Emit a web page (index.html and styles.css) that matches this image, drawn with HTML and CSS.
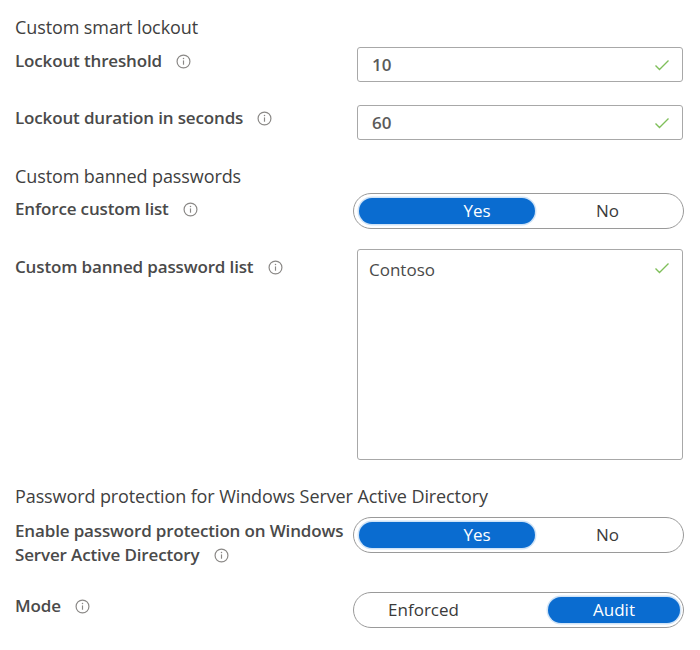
FILE: index.html
```html
<!DOCTYPE html>
<html>
<head>
<meta charset="utf-8">
<link rel="stylesheet" href="styles.css">
</head>
<body>
<div class="page">
  <div class="heading h1">Custom smart lockout</div>
  <div class="row r1">
    <div class="label">Lockout threshold <span class="info"><svg viewBox="0 0 14 14" width="15" height="15"><circle cx="7" cy="7" r="6" fill="none" stroke="#8a8886" stroke-width="1.1"/><line x1="7" y1="6" x2="7" y2="10" stroke="#8a8886" stroke-width="1.1"/><circle cx="7" cy="4.2" r="0.7" fill="#8a8886"/></svg></span></div>
    <div class="input"><span class="val">10</span><svg class="check" viewBox="0 0 16 12" width="16" height="12"><path d="M1.5 6.5 L5.5 10.5 L14.5 1.5" fill="none" stroke="#7fbf5a" stroke-width="1.4"/></svg></div>
  </div>
  <div class="row r2">
    <div class="label">Lockout duration in seconds <span class="info"><svg viewBox="0 0 14 14" width="15" height="15"><circle cx="7" cy="7" r="6" fill="none" stroke="#8a8886" stroke-width="1.1"/><line x1="7" y1="6" x2="7" y2="10" stroke="#8a8886" stroke-width="1.1"/><circle cx="7" cy="4.2" r="0.7" fill="#8a8886"/></svg></span></div>
    <div class="input"><span class="val">60</span><svg class="check" viewBox="0 0 16 12" width="16" height="12"><path d="M1.5 6.5 L5.5 10.5 L14.5 1.5" fill="none" stroke="#7fbf5a" stroke-width="1.4"/></svg></div>
  </div>

  <div class="heading h2">Custom banned passwords</div>
  <div class="row r3">
    <div class="label">Enforce custom list <span class="info"><svg viewBox="0 0 14 14" width="15" height="15"><circle cx="7" cy="7" r="6" fill="none" stroke="#8a8886" stroke-width="1.1"/><line x1="7" y1="6" x2="7" y2="10" stroke="#8a8886" stroke-width="1.1"/><circle cx="7" cy="4.2" r="0.7" fill="#8a8886"/></svg></span></div>
    <div class="toggle">
      <div class="seg on yes">Yes</div>
      <div class="seg no">No</div>
    </div>
  </div>
  <div class="row r4">
    <div class="label">Custom banned password list <span class="info"><svg viewBox="0 0 14 14" width="15" height="15"><circle cx="7" cy="7" r="6" fill="none" stroke="#8a8886" stroke-width="1.1"/><line x1="7" y1="6" x2="7" y2="10" stroke="#8a8886" stroke-width="1.1"/><circle cx="7" cy="4.2" r="0.7" fill="#8a8886"/></svg></span></div>
    <div class="textarea"><span class="val">Contoso</span><svg class="check" viewBox="0 0 16 12" width="16" height="12"><path d="M1.5 6.5 L5.5 10.5 L14.5 1.5" fill="none" stroke="#7fbf5a" stroke-width="1.4"/></svg></div>
  </div>

  <div class="heading h3">Password protection for Windows Server Active Directory</div>
  <div class="row r5">
    <div class="label two">Enable password protection on Windows Server Active Directory <span class="info"><svg viewBox="0 0 14 14" width="15" height="15"><circle cx="7" cy="7" r="6" fill="none" stroke="#8a8886" stroke-width="1.1"/><line x1="7" y1="6" x2="7" y2="10" stroke="#8a8886" stroke-width="1.1"/><circle cx="7" cy="4.2" r="0.7" fill="#8a8886"/></svg></span></div>
    <div class="toggle">
      <div class="seg on yes">Yes</div>
      <div class="seg no">No</div>
    </div>
  </div>
  <div class="row r6">
    <div class="label">Mode <span class="info"><svg viewBox="0 0 14 14" width="15" height="15"><circle cx="7" cy="7" r="6" fill="none" stroke="#8a8886" stroke-width="1.1"/><line x1="7" y1="6" x2="7" y2="10" stroke="#8a8886" stroke-width="1.1"/><circle cx="7" cy="4.2" r="0.7" fill="#8a8886"/></svg></span></div>
    <div class="toggle">
      <div class="seg enforced">Enforced</div>
      <div class="seg on audit">Audit</div>
    </div>
  </div>
</div>
</body>
</html>
```

FILE: styles.css
```css
html, body {
  margin: 0;
  padding: 0;
  background: #ffffff;
}
body {
  font-family: "Open Sans", "Noto Sans", "Liberation Sans", sans-serif;
  color: #3a3a3a;
  font-size: 17px;
}
.page {
  padding: 16px 0 0 15px;
  width: 685px;
  box-sizing: border-box;
}
.heading {
  font-size: 18px;
  line-height: 22px;
  font-weight: 400;
  color: #404040;
  letter-spacing: -0.1px;
}
.h2, .h3 { margin-top: 25px; }
.row {
  display: flex;
  align-items: flex-start;
}
.r1 { margin-top: 9px; }
.r2 { margin-top: 23px; }
.r3 { margin-top: 6px; }
.r4 { margin-top: 20px; }
.r5 { margin-top: 10px; }
.r6 { margin-top: 25px; }
.label {
  width: 342px;
  flex: none;
  font-weight: 600;
  font-size: 17px;
  line-height: 22px;
  padding-top: 3px;
  color: #4a4a4a;
  letter-spacing: -0.15px;
}
.r2 .label { padding-top: 2px; }
.r3 .label { padding-top: 5px; }
.r4 .label { padding-top: 7px; }
.r5 .label { padding-top: 2px; line-height: 24px; width: 340px; margin-right: 2px; }
.r6 .label { padding-top: 3px; }
.info {
  display: inline-block;
  vertical-align: -2px;
  margin-left: 10px;
}
.info svg { display: block; }
.input, .textarea {
  width: 326px;
  height: 35px;
  box-sizing: border-box;
  border: 1.5px solid #a8a8a8;
  border-radius: 3px;
  display: flex;
  align-items: center;
  justify-content: space-between;
  padding: 0 12px 0 14px;
  color: #5a5a5a;
  font-weight: 600;
}
.textarea {
  height: 211px;
  align-items: flex-start;
  padding-top: 8px;
  font-weight: 400;
  padding-left: 11px;
  color: #4a4a4a;
}
.textarea .check { margin-top: 4px; }
.val { font-size: 17px; }
.check { display: block; }
.toggle {
  width: 331px;
  height: 36px;
  box-sizing: border-box;
  border: 1.5px solid #9a9a9a;
  border-radius: 18px;
  padding: 4px 3px;
  display: flex;
  margin-left: -4px;
}
.seg {
  height: 26px;
  line-height: 26px;
  font-size: 17px;
  color: #3a3a3a;
  text-align: center;
  box-sizing: border-box;
}
.seg.on {
  background: #0a6cd0;
  color: #ffffff;
  border-radius: 14px;
  box-shadow: 0 0 0 1.5px #cfe3f7;
}
.yes {
  width: 176px;
  padding-left: 60px;
  margin-left: 2px;
}
.no { flex: 1; }
.enforced {
  flex: 1;
  padding-right: 58px;
}
.audit { width: 132px; }
```
